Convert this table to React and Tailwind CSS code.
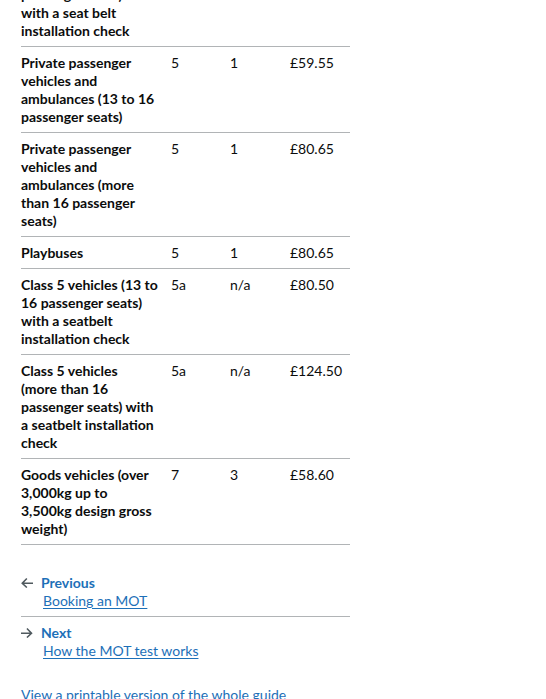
import React from "react";

const rows = [
  { name: ["Class 4 vehicles", "(9 to 12", "passenger seats)", "with a seat belt", "installation check"], c: "4", d: "2", f: "£56.40" },
  { name: ["Private passenger", "vehicles and", "ambulances (13 to 16", "passenger seats)"], c: "5", d: "1", f: "£59.55" },
  { name: ["Private passenger", "vehicles and", "ambulances (more", "than 16 passenger", "seats)"], c: "5", d: "1", f: "£80.65" },
  { name: ["Playbuses"], c: "5", d: "1", f: "£80.65" },
  { name: ["Class 5 vehicles (13 to", "16 passenger seats)", "with a seatbelt", "installation check"], c: "5a", d: "n/a", f: "£80.50" },
  { name: ["Class 5 vehicles", "(more than 16", "passenger seats) with", "a seatbelt installation", "check"], c: "5a", d: "n/a", f: "£124.50" },
  { name: ["Goods vehicles (over", "3,000kg up to", "3,500kg design gross", "weight)"], c: "7", d: "3", f: "£58.60" },
];

function ArrowLeft() {
  return (
    <svg className="w-[12px] h-[10px] shrink-0 mr-[8px]" viewBox="0 0 15 13" fill="#505a5f" aria-hidden="true">
      <path d="m6.5938-0.0078125-6.7266 6.7266 6.7441 6.4062 1.377-1.449-4.1856-3.9768h12.896v-2h-12.984l4.2931-4.293-1.414-1.414z" />
    </svg>
  );
}

function ArrowRight() {
  return (
    <svg className="w-[12px] h-[10px] shrink-0 mr-[8px]" viewBox="0 0 15 13" fill="#505a5f" aria-hidden="true">
      <path d="m8.107-0.0078125-1.4136 1.414 4.2926 4.293h-12.986v2h12.896l-4.1855 3.9766 1.377 1.4492 6.7441-6.4062-6.7246-6.7266z" />
    </svg>
  );
}

export default function App() {
  return (
    <div className="w-[546px] h-[699px] overflow-hidden bg-white text-[#0b0c0c] font-['Lato','Liberation_Sans',sans-serif] text-[14px] leading-[18px]">
      <div className="ml-[21px] w-[329px] mt-[-57px]">
        <table className="table-fixed w-[329px] border-collapse">
          <colgroup>
            <col className="w-[150px]" />
            <col className="w-[59px]" />
            <col className="w-[60px]" />
            <col className="w-[60px]" />
          </colgroup>
          <tbody>
            {rows.map((r, i) => (
              <tr key={i} className="border-b border-[#b1b4b6]">
                <th scope="row" className="text-left align-top font-bold pt-[7px] pb-[6px] pr-[10px]">
                  {r.name.map((l, j) => (
                    <span key={j} className="block whitespace-nowrap">{l}</span>
                  ))}
                </th>
                <td className="align-top pt-[7px] pb-[6px]">{r.c}</td>
                <td className="align-top pt-[7px] pb-[6px]">{r.d}</td>
                <td className="align-top pt-[7px] pb-[6px]">{r.f}</td>
              </tr>
            ))}
          </tbody>
        </table>

        <nav className="mt-[29px]">
          <div className="pb-[6px] border-b border-[#b1b4b6]">
            <div className="flex items-center text-[#1d70b8] font-bold">
              <ArrowLeft />
              <span>Previous</span>
            </div>
            <div className="pl-[22px]">
              <a href="#" className="text-[#1d70b8] underline underline-offset-[2px]">Booking an MOT</a>
            </div>
          </div>
          <div className="pt-[7px]">
            <div className="flex items-center text-[#1d70b8] font-bold">
              <ArrowRight />
              <span>Next</span>
            </div>
            <div className="pl-[22px]">
              <a href="#" className="text-[#1d70b8] underline underline-offset-[2px]">How the MOT test works</a>
            </div>
          </div>
        </nav>

        <div className="mt-[26px]">
          <a href="#" className="text-[#1d70b8] underline underline-offset-[2px]">View a printable version of the whole guide</a>
        </div>
      </div>
    </div>
  );
}
